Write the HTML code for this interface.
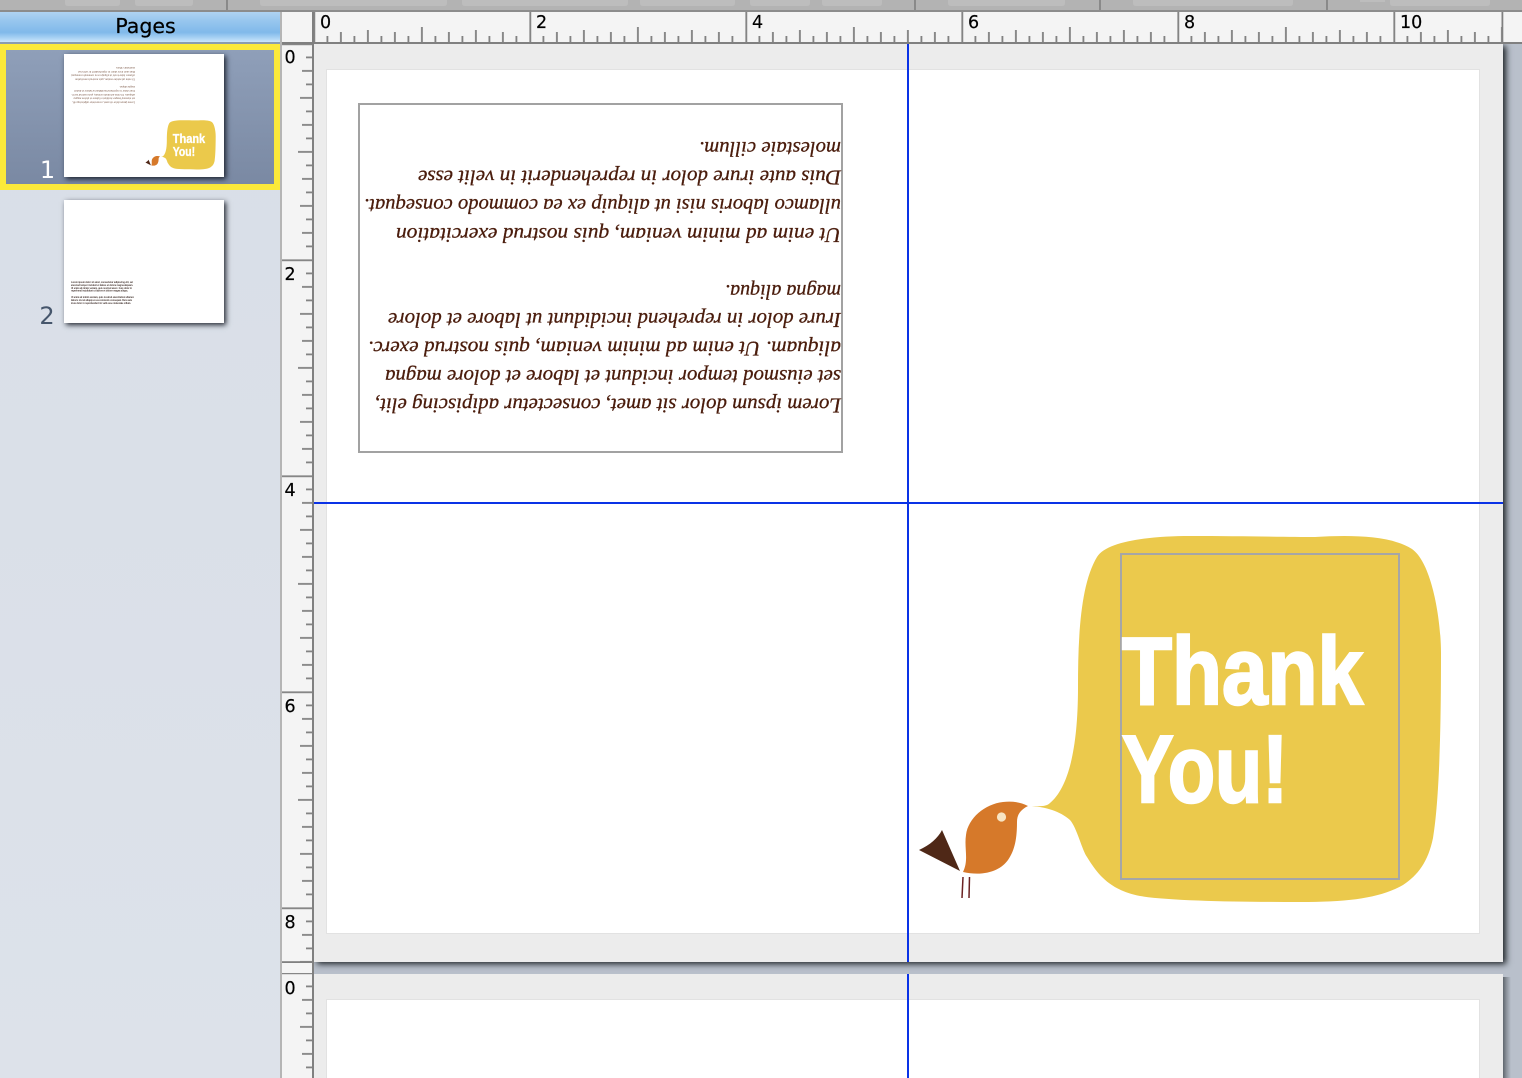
<!DOCTYPE html>
<html><head><meta charset="utf-8"><style>
html,body{margin:0;padding:0;width:1522px;height:1078px;overflow:hidden;background:#b9c0cb}
#w{position:absolute;left:0;top:0;width:1522px;height:1078px;overflow:hidden;background:#b9c0cb}
.a{position:absolute}
svg{position:absolute;left:0;top:0;display:block}
</style></head><body><div id="w">
<div class="a" style="left:314px;top:44px;width:1189px;height:918px;background:#ececec;box-shadow:3px 2px 6px rgba(20,25,30,.95)"></div>
<div class="a" style="left:314px;top:974px;width:1189px;height:104px;background:#ececec"></div>
<div class="a" style="left:1503px;top:977px;width:8px;height:101px;background:linear-gradient(90deg,#5f666d,#8d949d 45%,#b9c0cb)"></div>
<div class="a" style="left:0;top:12px;width:280px;height:1066px;background:linear-gradient(#d8dee7,#dde2ea)"></div>
<div class="a" style="left:280px;top:12px;width:2px;height:1066px;background:#b5b5b5"></div>
<div class="a" style="left:282px;top:12px;width:31px;height:1066px;background:#f4f4f4"></div>
<div class="a" style="left:282px;top:12px;width:1240px;height:30px;background:#f4f4f4"></div>
<div class="a" style="left:0;top:12px;width:280px;height:30px;background:linear-gradient(#afd3f2 0,#97c6ee 30%,#80b9ea 68%,#a6d0f3 85%,#cbe5fb 100%)"></div>
<div class="a" style="left:0;top:42px;width:280px;height:2px;background:#8a9cae"></div>
<div class="a" style="left:0;top:44px;width:268px;height:134px;border:6px solid #fbe93a;background:linear-gradient(#8f9fb9,#7a89a3)"></div>
<div class="a" style="left:64px;top:54px;width:160px;height:123px;background:#fff;box-shadow:2px 2px 5px rgba(15,20,30,.9)"></div>
<div class="a" style="left:64px;top:200px;width:160px;height:123px;background:#fff;box-shadow:2px 2px 5px rgba(15,20,30,.9)"></div>
<div class="a" style="left:326px;top:69px;width:1152px;height:863px;background:#fff;border:1px solid #e2e2e2"></div>
<div class="a" style="left:326px;top:999px;width:1152px;height:78px;background:#fff;border:1px solid #e2e2e2;border-bottom:0"></div>

<svg width="1522" height="1078" viewBox="0 0 1522 1078" xmlns="http://www.w3.org/2000/svg">
<defs>
<pattern id="rh" patternUnits="userSpaceOnUse" x="313.4" y="12" width="216" height="30">
<path stroke="#808080" stroke-width="1.8" fill="none" d="M.9 0V30M14 24V30M27.5 20V30M41 24V30M54.5 18V30M68 24V30M81.5 20V30M95 24V30M108.5 15V30M122 24V30M135.5 20V30M149 24V30M162.5 18V30M176 24V30M189.5 20V30M203 24V30"/>
</pattern>
<pattern id="rv" patternUnits="userSpaceOnUse" x="282" y="43.4" width="31" height="216">
<path stroke="#808080" stroke-width="1.8" fill="none" d="M0 .9H31M24 14H31M20 27.5H31M24 41H31M18 54.5H31M24 68H31M20 81.5H31M24 95H31M16 108.5H31M24 122H31M20 135.5H31M24 149H31M18 162.5H31M24 176H31M20 189.5H31M24 203H31"/>
</pattern>
<pattern id="rv2" patternUnits="userSpaceOnUse" x="282" y="972.4" width="31" height="216">
<path stroke="#808080" stroke-width="1.8" fill="none" d="M0 .9H31M24 14H31M20 27.5H31M24 41H31M18 54.5H31M24 68H31M20 81.5H31M24 95H31M16 108.5H31"/>
</pattern>
<filter id="b" x="-5%" y="-5%" width="110%" height="110%"><feGaussianBlur stdDeviation="1.6"/></filter>
<filter id="b2" x="-5%" y="-20%" width="110%" height="140%"><feGaussianBlur stdDeviation=".35"/></filter>
</defs>

<!-- toolbar -->
<rect x="0" y="0" width="1522" height="11" fill="#b3b3b3"/>
<rect x="0" y="10" width="1522" height="2" fill="#8c8c8c"/>
<g fill="#bdbdbd">
<path d="M65 0H120V3Q120 6 117 6H68Q65 6 65 3Z"/><path d="M135 0H193V3Q193 6 190 6H138Q135 6 135 3Z"/>
<path d="M260 0H447V3Q447 6 444 6H263Q260 6 260 3Z"/><path d="M462 0H628V3Q628 6 625 6H465Q462 6 462 3Z"/>
<path d="M640 0H735V3Q735 6 732 6H643Q640 6 640 3Z"/><path d="M750 0H810V3Q810 6 807 6H753Q750 6 750 3Z"/>
<path d="M822 0H882V3Q882 6 879 6H825Q822 6 822 3Z"/><path d="M948 0H1065V3Q1065 6 1062 6H951Q948 6 948 3Z"/>
<path d="M1133 0H1293V3Q1293 6 1290 6H1136Q1133 6 1133 3Z"/><rect x="1360" y="0" width="25" height="2"/>
<path d="M1390 0H1490V3Q1490 6 1487 6H1393Q1390 6 1390 3Z"/>
</g>
<path stroke="#6e6e6e" stroke-width="1.2" d="M227 0V10M915 0V10M1100 0V10M1327 0V10"/>

<text x="145.5" y="33" text-anchor="middle" font-family="'DejaVu Sans',sans-serif" font-size="20.5" fill="#000" stroke="#000" stroke-width=".25">Pages</text>

<!-- rulers -->
<rect x="314" y="12" width="1189" height="30" fill="url(#rh)"/>
<rect x="312" y="12" width="2" height="1066" fill="#808080"/>
<rect x="282" y="42" width="1240" height="2" fill="#808080"/>
<rect x="282" y="44" width="31" height="918" fill="url(#rv)"/>
<rect x="282" y="973" width="31" height="105" fill="url(#rv2)"/>
<rect x="282" y="961.2" width="31" height="1.8" fill="#808080"/>
<rect x="1501.5" y="12" width="1.8" height="30" fill="#808080"/>
<g font-family="'DejaVu Sans',sans-serif" font-size="17.5" fill="#000" stroke="#000" stroke-width=".2">
<text x="320" y="28">0</text><text x="536" y="28">2</text><text x="752" y="28">4</text><text x="968" y="28">6</text><text x="1184" y="28">8</text><text x="1400" y="28">10</text>
<text x="284.5" y="63">0</text><text x="284.5" y="280">2</text><text x="284.5" y="496">4</text><text x="284.5" y="712">6</text><text x="284.5" y="928">8</text><text x="284.5" y="994">0</text>
</g>

<!-- thumbnails numbers -->
<text x="47.5" y="178" text-anchor="middle" font-family="'DejaVu Sans',sans-serif" font-size="24" fill="#fff">1</text>
<text x="47" y="324" text-anchor="middle" font-family="'DejaVu Sans',sans-serif" font-size="24" fill="#46566c">2</text>

<!-- thumb 1 -->
<g transform="translate(64,54) scale(.1346) translate(-314,-44)" filter="url(#b)">
<g font-family="'Liberation Serif',serif" font-style="italic" font-size="21" fill="#4a1c0c" opacity=".8">
<text transform="rotate(180 841 141)" x="841" y="141" textLength="142" lengthAdjust="spacingAndGlyphs">molestaie cillum.</text>
<text transform="rotate(180 841 170)" x="841" y="170" textLength="423" lengthAdjust="spacingAndGlyphs">Duis aute irure dolor in reprehenderit in velit esse</text>
<text transform="rotate(180 841 198)" x="841" y="198" textLength="477" lengthAdjust="spacingAndGlyphs">ullamco laboris nisi ut aliquip ex ea commodo consequat.</text>
<text transform="rotate(180 841 227)" x="841" y="227" textLength="445" lengthAdjust="spacingAndGlyphs">Ut enim ad minim veniam, quis nostrud exercitation</text>
<text transform="rotate(180 841 283)" x="841" y="283" textLength="116" lengthAdjust="spacingAndGlyphs">magna aliqua.</text>
<text transform="rotate(180 841 311)" x="841" y="311" textLength="453" lengthAdjust="spacingAndGlyphs">Irure dolor in reprehend incididunt ut labore et dolore</text>
<text transform="rotate(180 841 340)" x="841" y="340" textLength="473" lengthAdjust="spacingAndGlyphs">aliquam. Ut enim ad minim veniam, quis nostrud exerc.</text>
<text transform="rotate(180 841 368)" x="841" y="368" textLength="456" lengthAdjust="spacingAndGlyphs">set eiusmod tempor incidunt et labore et dolore magna</text>
<text transform="rotate(180 841 397)" x="841" y="397" textLength="466" lengthAdjust="spacingAndGlyphs">Lorem ipsum dolor sit amet, consectetur adipiscing elit,</text>
</g>
<path fill="#ebc94c" d="M1031.7 806C1040 806 1046 807 1050 803C1068 788 1078 750 1078 687C1078 640 1080 585 1097 557C1107 541 1150 536 1190 536C1240 536 1290 537 1315 537C1350 535 1390 535 1412 549C1432 563 1441 620 1441 653C1441 690 1441 790 1433 838C1428 862 1418 875 1403 885C1380 898 1350 902 1300 902C1240 902 1170 901 1140 896C1110 890 1098 875 1087 857C1082 850 1077 828 1070 820C1060 811 1045 807 1031.7 806Z"/>
<text x="1122" y="704" font-family="'Liberation Sans Narrow','Liberation Sans',sans-serif" font-weight="bold" font-size="96" fill="#fff" stroke="#fff" stroke-width="2.5" textLength="241" lengthAdjust="spacingAndGlyphs">Thank</text>
<text x="1122" y="802" font-family="'Liberation Sans Narrow','Liberation Sans',sans-serif" font-weight="bold" font-size="96" fill="#fff" stroke="#fff" stroke-width="2.5" textLength="166" lengthAdjust="spacingAndGlyphs">You!</text>
<path fill="#d6792a" d="M1028 806C1020 802 1012 801 1003 802C985 804 968 818 966 835C964 848 969 860 963 872C985 877 1001 870 1008 860C1015 850 1017 838 1017 822C1017 815 1020 810 1028 806Z"/>
<path fill="#4f2817" d="M919 850C930 845 938 838 942 830L960 871Z"/>
</g>

<!-- thumb 2 text -->
<g font-family="'Liberation Sans',sans-serif" font-weight="bold" font-size="3" fill="#3a2a24" filter="url(#b2)">
<text x="71" y="283" textLength="62" lengthAdjust="spacingAndGlyphs">Lorem ipsum dolor sit amet, consectetur adipiscing elit, set</text>
<text x="71" y="286" textLength="62" lengthAdjust="spacingAndGlyphs">eiusmod tempor incidunt et labore et dolore magna aliquam.</text>
<text x="71" y="288.8" textLength="61" lengthAdjust="spacingAndGlyphs">Ut enim ad minim veniam, quis nostrud exerc. Irure dolor in</text>
<text x="71" y="291.6" textLength="57" lengthAdjust="spacingAndGlyphs">reprehend incididunt ut labore et dolore magna aliqua.</text>
<text x="71" y="297.8" textLength="63" lengthAdjust="spacingAndGlyphs">Ut enim ad minim veniam, quis nostrud exercitation ullamco</text>
<text x="71" y="300.8" textLength="61" lengthAdjust="spacingAndGlyphs">laboris nisi ut aliquip ex ea commodo consequat. Duis aute</text>
<text x="71" y="303.8" textLength="60" lengthAdjust="spacingAndGlyphs">irure dolor in reprehenderit in velit esse molestaie cillum.</text>
</g>

<!-- page 1 text frame -->
<rect x="359" y="104" width="483" height="348" fill="none" stroke="#a2a2a2" stroke-width="2"/>
<g font-family="'Liberation Serif',serif" font-style="italic" font-size="21.5" fill="#4a1c0c" stroke="#4a1c0c" stroke-width=".3">
<text transform="rotate(180 841 142)" x="841" y="142" textLength="142" lengthAdjust="spacingAndGlyphs">molestaie cillum.</text>
<text transform="rotate(180 841 170.5)" x="841" y="170.5" textLength="423" lengthAdjust="spacingAndGlyphs">Duis aute irure dolor in reprehenderit in velit esse</text>
<text transform="rotate(180 841 199)" x="841" y="199" textLength="477" lengthAdjust="spacingAndGlyphs">ullamco laboris nisi ut aliquip ex ea commodo consequat.</text>
<text transform="rotate(180 841 228)" x="841" y="228" textLength="445" lengthAdjust="spacingAndGlyphs">Ut enim ad minim veniam, quis nostrud exercitation</text>
<text transform="rotate(180 841 285)" x="841" y="285" textLength="116" lengthAdjust="spacingAndGlyphs">magna aliqua.</text>
<text transform="rotate(180 841 313)" x="841" y="313" textLength="453" lengthAdjust="spacingAndGlyphs">Irure dolor in reprehend incididunt ut labore et dolore</text>
<text transform="rotate(180 841 341.5)" x="841" y="341.5" textLength="473" lengthAdjust="spacingAndGlyphs">aliquam.  Ut enim ad minim veniam, quis nostrud exerc.</text>
<text transform="rotate(180 841 370)" x="841" y="370" textLength="456" lengthAdjust="spacingAndGlyphs">set eiusmod tempor incidunt et labore et dolore magna</text>
<text transform="rotate(180 841 398.5)" x="841" y="398.5" textLength="466" lengthAdjust="spacingAndGlyphs">Lorem ipsum dolor sit amet, consectetur adipiscing elit,</text>
</g>

<!-- bubble -->
<path fill="#ebc94c" d="M1031.7 806C1040 806 1046 807 1050 803C1068 788 1078 750 1078 687C1078 640 1080 585 1097 557C1107 541 1150 536 1190 536C1240 536 1290 537 1315 537C1350 535 1390 535 1412 549C1432 563 1441 620 1441 653C1441 690 1441 790 1433 838C1428 862 1418 875 1403 885C1380 898 1350 902 1300 902C1240 902 1170 901 1140 896C1110 890 1098 875 1087 857C1082 850 1077 828 1070 820C1060 811 1045 807 1031.7 806Z"/>
<rect x="1121" y="554" width="278" height="325" fill="none" stroke="#a6a6a6" stroke-width="2"/>
<text x="1122" y="704" font-family="'Liberation Sans Narrow','Liberation Sans',sans-serif" font-weight="bold" font-size="96" fill="#fff" stroke="#fff" stroke-width="2.5" textLength="241" lengthAdjust="spacingAndGlyphs">Thank</text>
<text x="1122" y="802" font-family="'Liberation Sans Narrow','Liberation Sans',sans-serif" font-weight="bold" font-size="96" fill="#fff" stroke="#fff" stroke-width="2.5" textLength="166" lengthAdjust="spacingAndGlyphs">You!</text>

<!-- bird -->
<path fill="#d6792a" d="M1028 806C1020 802 1012 801 1003 802C985 804 968 818 966 835C964 848 969 860 963 872C985 877 1001 870 1008 860C1015 850 1017 838 1017 822C1017 815 1020 810 1028 806Z"/>
<circle cx="1001.5" cy="817" r="4.6" fill="#f8e5c3"/>
<path fill="#4f2817" d="M919 850C930 845 938 838 942 830L960 871Z"/>
<path stroke="#6b2222" stroke-width="1.5" fill="none" d="M963 877L962 898M969.5 877L969 898"/>

<!-- guides -->
<path stroke="#0a32e6" stroke-width="2" fill="none" d="M908 44V962M908 974V1078M314 503H1503"/>
</svg>
</div></body></html>
